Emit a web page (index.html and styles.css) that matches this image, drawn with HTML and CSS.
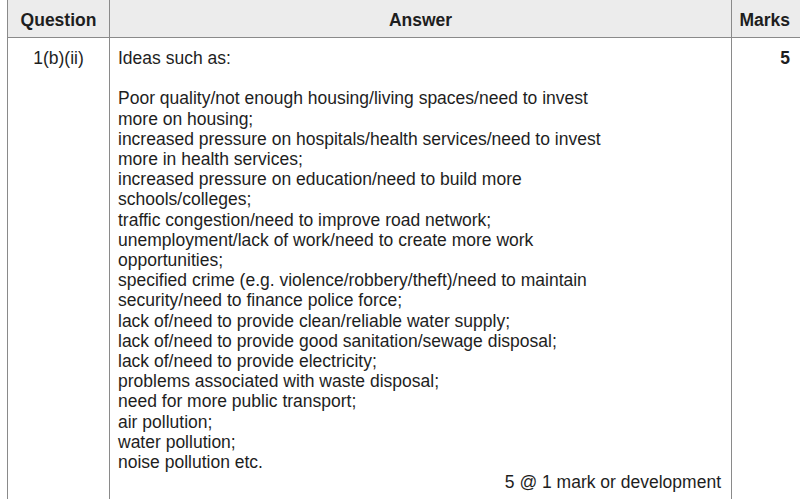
FILE: index.html
```html
<!DOCTYPE html>
<html lang="en">
<head>
<meta charset="utf-8">
<title>Mark scheme</title>
<link rel="stylesheet" href="styles.css">
</head>
<body>
<div class="scheme">
  <div class="head qcol">Question</div>
  <div class="head acol">Answer</div>
  <div class="head mcol">Marks</div>

  <div class="cell qcol">1(b)(ii)</div>
  <div class="cell acol">
    <div class="line">Ideas such as:</div>
    <div class="line blank">&nbsp;</div>
    <div class="line">Poor quality/not enough housing/living spaces/need to invest</div>
    <div class="line">more on housing;</div>
    <div class="line">increased pressure on hospitals/health services/need to invest</div>
    <div class="line">more in health services;</div>
    <div class="line">increased pressure on education/need to build more</div>
    <div class="line">schools/colleges;</div>
    <div class="line">traffic congestion/need to improve road network;</div>
    <div class="line">unemployment/lack of work/need to create more work</div>
    <div class="line">opportunities;</div>
    <div class="line">specified crime (e.g. violence/robbery/theft)/need to maintain</div>
    <div class="line">security/need to finance police force;</div>
    <div class="line">lack of/need to provide clean/reliable water supply;</div>
    <div class="line">lack of/need to provide good sanitation/sewage disposal;</div>
    <div class="line">lack of/need to provide electricity;</div>
    <div class="line">problems associated with waste disposal;</div>
    <div class="line">need for more public transport;</div>
    <div class="line">air pollution;</div>
    <div class="line">water pollution;</div>
    <div class="line">noise pollution etc.</div>
    <div class="line note">5 @ 1 mark or development</div>
  </div>
  <div class="cell mcol mark">5</div>
</div>
</body>
</html>
```

FILE: styles.css
```css
html, body {
  margin: 0;
  padding: 0;
  background: #ffffff;
  overflow: hidden;
}

body {
  font-family: "Liberation Sans", Arial, sans-serif;
  font-size: 17.5px;
  line-height: 20.2px;
  color: #1e1e1e;
}

.scheme {
  display: grid;
  grid-template-columns: 102px 622px 68px;
  margin-left: 7px;
  border-left: 1px solid #8a8a8a;
  width: 792px;
}

.head {
  box-sizing: border-box;
  height: 38px;
  padding-top: 10px;
  background: #ececec;
  border-bottom: 1px solid #8a8a8a;
  font-weight: bold;
  text-align: center;
}

.qcol {
  border-right: 1px solid #8a8a8a;
  text-align: center;
}

.acol {
  border-right: 1px solid #8a8a8a;
}

.head.acol {
  text-align: center;
}

.mcol {
  text-align: right;
  padding-right: 10px;
}

.head.mcol {
  text-align: right;
}

.cell {
  padding-top: 10px;
  padding-bottom: 12px;
}

.cell.acol {
  padding-left: 8px;
  padding-right: 10px;
}

.line {
  white-space: nowrap;
}

.note {
  text-align: right;
}

.mark {
  font-weight: bold;
}
```
